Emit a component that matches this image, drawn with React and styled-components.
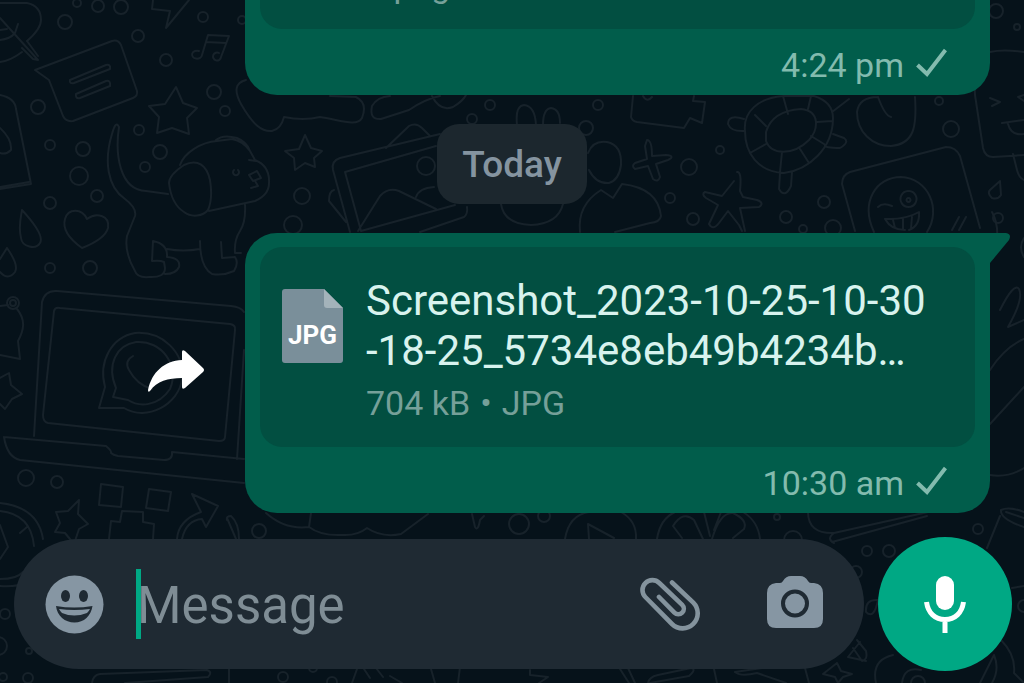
import { useState } from "react";
import styled, { createGlobalStyle } from "styled-components";

const GlobalStyle = createGlobalStyle`
*{
    box-sizing:border-box;
}
body{
    margin:0;
    background:#06121a;
    font-family:Roboto, "Liberation Sans", sans-serif;
}
button{
    padding:0;
    border:none;
    background:none;
    cursor:pointer;
}
svg{
    display:block;
}
`

const messages = [
    { id: 1, name: [], info: ["1 page"], time: "4:24 pm" },
    { id: 2, day: "Today", name: ["Screenshot_2023-10-25-10-30", "-18-25_5734e8eb49b4234b…"], icon: "JPG", info: ["704 kB", "•", "JPG"], time: "10:30 am" },
];

// bubbles scattered between the doodles: x, y, radius
const dots = [
    [77, 3, 4], [98, 6, 6], [121, 7, 7], [65, 22, 7], [203, 17, 5], [138, 36, 6], [166, 60, 6], [38, 107, 7],
    [214, 92, 7], [225, 111, 5], [139, 130, 5], [160, 152, 7], [145, 167, 5], [50, 145, 5], [83, 149, 7],
    [79, 176, 9], [97, 196, 6], [50, 203, 6], [50, 268, 5], [90, 268, 7], [302, 196, 8], [293, 225, 9],
    [242, 20, 4], [490, 105, 5], [472, 119, 5], [598, 105, 5], [586, 128, 7], [426, 166, 9], [689, 167, 8], [720, 150, 4],
    [670, 198, 5], [693, 219, 6], [786, 217, 6], [824, 202, 6], [833, 228, 8], [803, 229, 4], [939, 101, 4],
    [951, 129, 8], [998, 218, 5], [26, 478, 8], [57, 482, 6], [259, 531, 7], [13, 303, 6], [13, 303, 3],
    [996, 11, 7], [1017, 27, 3], [867, 551, 5], [889, 551, 6], [978, 529, 5], [777, 517, 3], [793, 540, 9],
    [856, 572, 6], [1024, 606, 6], [5, 614, 5], [-2, 646, 9], [29, 651, 3], [3, 677, 4], [28, 678, 5],
    [283, 677, 5], [313, 668, 4], [332, 682, 5], [519, 524, 10], [544, 516, 6],
];

const doodles = [
    // leaf
    "M0 3H27Q41 6 41 20Q41 29 27 41M22 52Q10 61 0 62M0 18L38 60L33 59L22 48M27 41L38 56M0 40Q10 39 15 33L18 24M0 30L7 29",
    // speech card
    "M35 70L112 41Q118 39 121 45L137 91Q138 96 133 98L73 121Q66 122 63 116L49 80ZM70 80L106 65Q111 64 110 69L74 83Q69 84 70 80M76 94L106 81Q111 80 110 86L80 98Q75 99 76 94",
    // lightning
    "M153 0L152 9L170 11L166 28L189 0",
    // notes
    "M202 55L208 35L229 36L221 57M206 42L226 43M202 55a5 4 0 1 1-3-4M221 57a4 4 0 1 1-2-4",
    // star
    "M176 87L183 103L197 108L187 118L189 134L172 128L157 133L159 117L149 106L165 104Z",
    // door hanger
    "M0 95Q15 98 16 109L31 184L0 189M29 182L0 187M0 128Q12 139 11 150Q6 155 0 153",
    // heart
    "M82 248Q61 233 65 219C68 208 82 208 87 219C96 212 110 215 108 228Q105 239 82 248",
    // drops
    "M22 210Q45 235 40 243C36 250 22 247 21 238C18 226 21 217 22 210M7 248Q19 265 15 272Q8 281 0 272M0 259L7 248",
    // dog
    "M119 127C116 121 114 127 112 134C104 160 107 187 125 199Q137 208 135 216L127 236Q124 252 135 271Q137 278 149 277Q165 278 165 268L164 262Q160 260 152 261L153 241Q168 244 167 257M119 127C115 153 119 190 146 191L168 194M245 204Q246 222 240 231Q234 240 235 253M180 165C184 153 201 142 217 141L232 139Q243 141 250 151L255 160Q270 166 269 183Q269 195 255 201L209 211M216 140Q223 134 237 138Q247 142 250 151M169 183Q169 175 184 165C198 158 207 166 210 180Q213 199 208 210C203 216 192 218 184 212C173 205 170 192 169 183M167 249Q183 252 200 249M200 241Q200 267 212 274Q223 276 234 271Q239 263 235 257L222 258L221 242M167 257Q181 258 179 267Q176 274 165 274M235 253L241 253M249 160L256 161",
    "M249 175L257 171L261 178L253 181L249 175M255 181L258 186L251 188M238 170a3 3 0 1 1-4 0",
    // cloud
    "M246 80Q230 84 241 104C253 125 262 132 272 131Q281 129 284 117Q303 121 320 117C340 120 357 127 362 118Q368 103 356 97L330 96",
    "M440 96Q425 99 409 110L381 119Q369 120 372 106Q377 97 390 96M432 96Q440 112 453 107Q463 101 466 95",
    // little star
    "M305 135L311 148L322 151L314 158L315 167L305 163L295 170L294 158L285 151L299 149Z",
    // pictures
    "M440 134L340 158Q331 161 333 170L350 232M361 231L345 172L436 146M358 231L380 196Q388 187 399 191L436 209M361 231L455 205M416 197Q419 188 434 187M386 148L409 126Q416 122 422 128L430 136M334 190Q329 191 329 201L346 222M420 232L464 217Q468 214 467 207",
    // bunny
    "M517 125Q515 106 524 105Q535 106 536 125M543 125Q543 109 551 108Q560 109 560 123M501 204Q504 224 531 225Q558 224 563 204",
    // balloons
    "M588 153Q593 140 607 142Q622 145 621 165Q619 180 609 183Q596 184 589 170M580 232Q577 205 601 190L613 198L622 184Q658 188 661 216Q660 222 650 223L615 232",
    // puzzle piece
    "M633 96L631 117Q632 121 637 122L684 128L690 118L702 123L705 102L693 101L694 96M643 96Q647 103 652 97",
    // plus
    "M647 140Q652 140 652 156L666 155Q676 156 668 160L656 164L660 177Q658 183 653 179L648 166L635 169Q631 166 635 163L647 159L645 146Z",
    // starfish
    "M737 172Q742 171 740 191L743 197L757 200Q765 203 759 207L740 208L745 231M734 181L722 196L705 192Q701 194 706 198L718 205L709 224Q713 231 719 223L728 211L739 225L742 231",
    // turtle
    "M745 131C743 112 758 98 783 96L814 96Q833 102 833 118C833 149 808 170 784 173C758 172 745 153 745 131M766 132Q772 111 801 109C821 111 818 130 809 140C793 156 771 155 766 141ZM783 96L788 114M808 109L811 96M817 122L832 121M811 136L824 144M800 149L809 163M782 152L780 172M766 144L750 153M766 126L755 115M744 119Q728 114 728 124Q731 132 745 131M825 145Q824 148 840 148Q850 142 844 138L833 134M780 173L779 189Q785 199 791 186L792 172M832 112L849 99",
    // apple
    "M878 97Q859 97 857 112C857 132 872 146 891 146C914 144 917 127 915 97M878 97Q885 116 891 117",
    // winking card
    "M855 231L842 184Q842 175 850 172L946 147Q956 147 960 156L980 228M874 232C860 202 876 177 901 177C928 178 942 209 927 232M878 207Q883 202 892 206M885 219Q905 220 919 212Q920 226 909 230M885 219Q891 230 905 230M893 220L895 228M903 219L903 229M912 217L911 228M952 230L959 217M959 230L966 217M908 191a8 8 0 1 0 1 0M908 198a2 2 0 1 0 1 0",
    // tongue card
    "M990 52Q1003 49 1024 52M974 75L975 95L983 148Q985 157 993 157L1024 155M990 98L1000 102L992 106M1024 95L1018 97L1024 101M1002 123L1024 120M1008 124Q1011 136 1024 134M1013 154L1017 170Q1019 178 1024 180M1000 181L1001 195Q998 200 992 198Q987 193 990 190Z",
    // laptop
    "M34 436L42 302Q45 290 57 291L231 306Q241 307 244 312M43 415L54 311Q55 307 60 308L230 324Q236 325 235 330L225 437Q225 441 219 441L48 423Q43 422 43 415M4 437Q7 457 20 460L244 483M4 437L106 446Q112 451 111 453Q113 455 118 456L164 460Q173 460 172 452L244 459M237 459L244 350",
    // badge on the laptop
    "M99 408L105 387C98 361 112 337 135 333C162 331 185 352 182 379C179 404 147 422 124 408ZM113 397L116 388C106 364 117 345 136 342C162 340 180 366 170 389C158 407 139 407 128 400ZM133 356Q124 361 129 370Q137 385 152 389",
    // pouch and star at the left edge
    "M0 306L8 305M17 309C26 320 24 330 18 341L20 359L0 355M0 378L9 373L11 385L22 394L12 399L5 409L0 404",
    // star, blocks and loop at the bottom
    "M79 500L78 514L88 524L79 529L74 544L65 533L55 532L60 523L56 512L68 511ZM101 484L123 487L121 507L99 505ZM149 489L171 492L168 511L146 508ZM109 539L111 521L120 522L122 511L143 512L143 522L154 524L153 539M177 539C178 525 187 517 201 512L192 494L218 506L206 527L202 519C189 520 184 530 182 539M227 518L236 539M239 539Q239 523 231 516Q226 516 227 520",
    "M0 503Q38 507 43 539M0 511Q31 514 34 546M0 525L8 547L0 559M20 533L27 527M0 579Q17 579 23 572M0 586Q17 587 25 583",
    // rain cloud
    "M266 513Q285 530 309 527L311 513M309 527Q321 536 342 535Q357 536 367 528Q382 538 401 534L428 514M472 514L475 527Q478 532 480 520L484 516",
    // play button, fruit
    "M565 539Q569 515 589 512M621 512Q637 521 636 539M589 539L588 524L614 538M657 539Q660 519 675 512M743 512Q758 521 760 539M673 526Q683 510 694 520L703 539M673 526L682 538M704 512L710 536M712 539Q720 512 733 513Q748 520 744 529L733 538M721 512L714 530",
    // notebook
    "M808 512Q808 534 834 533L928 512M832 542L927 516M834 533Q826 539 834 543",
    // flower at the right edge
    "M990 475Q1008 478 1024 468M992 212Q1002 230 993 258M1000 310Q1014 282 1019 289Q1024 299 1008 327L1024 320M990 370Q1005 347 1024 339M990 424L1024 387M1024 238Q1018 247 1024 257",
    // cup
    "M1001 510Q1009 506 1024 512M1001 510Q1000 519 1024 527M1000 516L987 548M1006 512L1024 518M1012 588L1024 586M866 612Q865 599 878 600Q874 620 866 612",
    // bottom strip
    "M92 683Q93 675 100 674L207 670Q213 672 208 677L125 683M229 669L229 683M352 683L357 669M364 669L370 678M376 668L383 677M390 676L402 683M431 669L435 683M460 667L458 683M530 670L530 675L548 677L539 683M620 669L629 683M628 668L635 683M648 683Q649 677 658 675L691 668Q697 669 689 676L650 683M714 669L717 683M735 672L762 668M735 672Q741 677 757 673L786 683M805 668L809 683M848 657L860 642M848 657L866 661M837 663L823 674L835 677L838 683L843 677L852 674L841 671ZM853 648L862 661Q868 660 866 651L857 640M876 683Q871 660 893 655M902 683Q904 666 921 670M911 683a7 7 0 0 1 14 0M980 683L994 655Q1000 669 992 683M1001 640Q1016 655 1014 673L1024 683",
];

const Wallpaper = () => (
    <Backdrop viewBox="0 0 1024 683" preserveAspectRatio="xMidYMid slice" aria-hidden="true">
        {dots.map(([x, y, r]) => <circle key={`${x}-${y}-${r}`} cx={x} cy={y} r={r} />)}
        {doodles.map((d) => <path key={d} d={d} />)}
    </Backdrop>
);

const ForwardIcon = () => (
    <svg width="57" height="43" viewBox="0 0 57 43" fill="#fff">
        <path d="M34 10V2Q34-1 37 1L55 18Q57 20 55 22L37 38Q34 40 34 37V28C20 28 9 31 2 41Q0 43 0 40C4 22 16 11 34 10Z" />
    </svg>
);

const CheckIcon = () => (
    <svg width="31" height="30" viewBox="0 0 31 30" fill="none" stroke="#83bbae" strokeWidth="4">
        <path d="M1.5 17L11 26L29.5 2" />
    </svg>
);

const SmileIcon = () => (
    <svg width="59" height="59" viewBox="0 0 59 59">
        <circle cx="29.5" cy="29.5" r="29" fill="#8696a3" />
        <g fill="#1f2a33">
            <ellipse cx="20.5" cy="21" rx="4.5" ry="6" />
            <ellipse cx="38.5" cy="21" rx="4.5" ry="6" />
            <path d="M11 31Q29 34 47.5 31C46 41 39 47.5 29.5 47.500S12 41 11 31Z" />
        </g>
        <path d="M14 34Q29 36 45 34Q44 36 42 38Q29 43 17 38Q15 36 14 34Z" fill="#8696a3" />
    </svg>
);

const ClipIcon = () => (
    <svg width="60" height="56" viewBox="0 0 60 56" fill="none" stroke="#84939d" strokeWidth="4.6" strokeLinecap="round">
        <path d="M32 6.5L53.3 26.7A15 15 0 0 1 32 48L5.3 21A9.9 9.9 0 0 1 19.3 7L42.2 28.8A5.5 5.5 0 0 1 34.4 36.6L19 21" />
    </svg>
);

const CameraIcon = () => (
    <svg width="56" height="52" viewBox="0 0 56 52">
        <path d="M9 7H13Q15 7 16 5Q19 0 24 0H33Q38 0 41 5Q42 7 44 7H47Q56 8 56 17V43Q56 52 47 52H9Q0 52 0 43V17Q0 8 9 7Z" fill="#8696a3" />
        <circle cx="28" cy="27.5" r="12" fill="none" stroke="#1f2a33" strokeWidth="4" />
    </svg>
);

const MicIcon = () => (
    <svg width="42" height="57" viewBox="0 0 42 57" fill="none" stroke="#fff" strokeWidth="5">
        <rect x="12" y="0" width="18" height="34" rx="9" fill="#fff" stroke="none" />
        <path d="M2.5 26C4 37 11 43.5 21 43.5S38 37 39.5 26M21 43V57" />
    </svg>
);

const Message = ({ message }) => (
    <MessageRow>
        <ForwardButton type="button" aria-label="Forward"><ForwardIcon /></ForwardButton>
        <Bubble>
            <Tail viewBox="0 0 20 31" aria-hidden="true">
                <path d="M0 0H16Q22 1 19 7L0 30Z" />
            </Tail>
            <FileCard>
                <FileBadge>
                    <svg width="61" height="74" viewBox="0 0 61 74">
                        <path d="M3 0H42L61 19V71Q61 74 58 74H3Q0 74 0 71V3Q0 0 3 0Z" fill="#7a8f9a" />
                        <path d="M42 0L61 19H45Q42 19 42 16Z" fill="#a4b3ba" />
                    </svg>
                    {message.icon && <span>{message.icon}</span>}
                </FileBadge>
                <div>
                    <FileName>{message.name.map((line) => <span key={line}>{line}</span>)}</FileName>
                    <FileInfo>{message.info.map((part) => <span key={part}>{part}</span>)}</FileInfo>
                </div>
            </FileCard>
            <Footer>
                <time>{message.time}</time>
                <CheckIcon />
            </Footer>
        </Bubble>
    </MessageRow>
);

const App = () => {
    const [text, setText] = useState("");

    const handleChange = (e) => {
        setText(e.target.value);
    }

    return (
        <Page>
            <GlobalStyle />
            <Wallpaper />
            <Chat>
                {messages.map((message) => [
                    message.day && <DayChip key={message.day}>{message.day}</DayChip>,
                    <Message key={message.id} message={message} />,
                ])}
            </Chat>
            <Composer onSubmit={(e) => e.preventDefault()}>
                <InputBar>
                    <button type="button" aria-label="Emoji"><SmileIcon /></button>
                    <Field>
                        {!text && <Caret />}
                        <input type="text" aria-label="Message" placeholder="Message" value={text} onChange={handleChange} />
                    </Field>
                    <button type="button" aria-label="Attach"><ClipIcon /></button>
                    <CameraButton type="button" aria-label="Camera"><CameraIcon /></CameraButton>
                </InputBar>
                <MicButton type="button" aria-label="Record voice message"><MicIcon /></MicButton>
            </Composer>
        </Page>
    );
};

const Page = styled.main`
position:relative;
isolation:isolate;
display:flex;
flex-direction:column;
height:100vh;
overflow:hidden;
`

const Backdrop = styled.svg`
position:absolute;
inset:0;
z-index:-1;
width:100%;
height:100%;
fill:none;
stroke:#17222a;
stroke-width:2;
stroke-linejoin:round;
stroke-linecap:round;
`

const Chat = styled.section`
flex:1;
min-height:0;
display:flex;
flex-direction:column;
justify-content:flex-end;
gap:29px;
padding-bottom:24px;
`

const DayChip = styled.div`
align-self:center;
flex-shrink:0;
padding:2px 25px 0;
border-radius:22px;
background:#1c272e;
color:#8594a0;
font-size:37px;
font-weight:500;
line-height:78px;
`

const MessageRow = styled.article`
display:flex;
flex-shrink:0;
align-items:center;
gap:40px;
padding:0 34px 0 148px;
`

const ForwardButton = styled.button`
padding-bottom:4px;
`

const Bubble = styled.div`
position:relative;
flex:1;
min-width:0;
padding:14px 15px 10px;
border-radius:32px 0 32px 32px;
background:#015d4b;
`

const Tail = styled.svg`
position:absolute;
top:0;
left:100%;
width:20px;
height:31px;
fill:#015d4b;
`

const FileCard = styled.div`
display:flex;
align-items:flex-end;
gap:23px;
min-height:200px;
padding:29px 22px 24px;
border-radius:22px;
background:#024f41;
`

const FileBadge = styled.div`
display:grid;
flex-shrink:0;
align-self:flex-start;
margin-top:13px;
>*{
    grid-area:1 / 1;
}
span{
    align-self:center;
    justify-self:center;
    padding-top:18px;
    color:#fff;
    font-size:26px;
    font-weight:700;
    line-height:26px;
}
`

const FileName = styled.div`
color:#d8f3ee;
font-size:42px;
line-height:50px;
white-space:nowrap;
span{
    display:block;
}
`

const FileInfo = styled.div`
display:flex;
gap:10px;
margin-top:7px;
color:#76a099;
font-size:34px;
line-height:40px;
`

const Footer = styled.div`
display:flex;
align-items:center;
justify-content:flex-end;
gap:12px;
padding:16px 28px 0 0;
color:#83bbae;
font-size:34px;
line-height:40px;
svg{
    margin-bottom:4px;
}
`

const Composer = styled.form`
display:flex;
align-items:center;
gap:14px;
padding:0 12px 12px 14px;
`

const InputBar = styled.div`
display:flex;
flex:1;
align-items:center;
min-width:0;
height:130px;
padding:0 41px 0 31px;
border-radius:65px;
background:#1f2a33;
`

const Field = styled.div`
display:flex;
flex:1;
align-items:center;
min-width:0;
padding-left:32px;
input{
    flex:1;
    min-width:0;
    padding:3px 0 0;
    border:none;
    outline:none;
    background:none;
    color:#e9edef;
    font:51px Roboto, "Liberation Sans", sans-serif;
    &::placeholder{
        color:#7f8d95;
        opacity:1;
    }
}
`

const Caret = styled.span`
flex-shrink:0;
width:5px;
height:70px;
margin-right:-4px;
background:#00a884;
`

const CameraButton = styled.button`
margin-left:67px;
padding-bottom:4px;
`

const MicButton = styled.button`
display:grid;
flex-shrink:0;
place-items:center;
width:134px;
height:134px;
border-radius:50%;
background:#00a884;
`

export default App;
